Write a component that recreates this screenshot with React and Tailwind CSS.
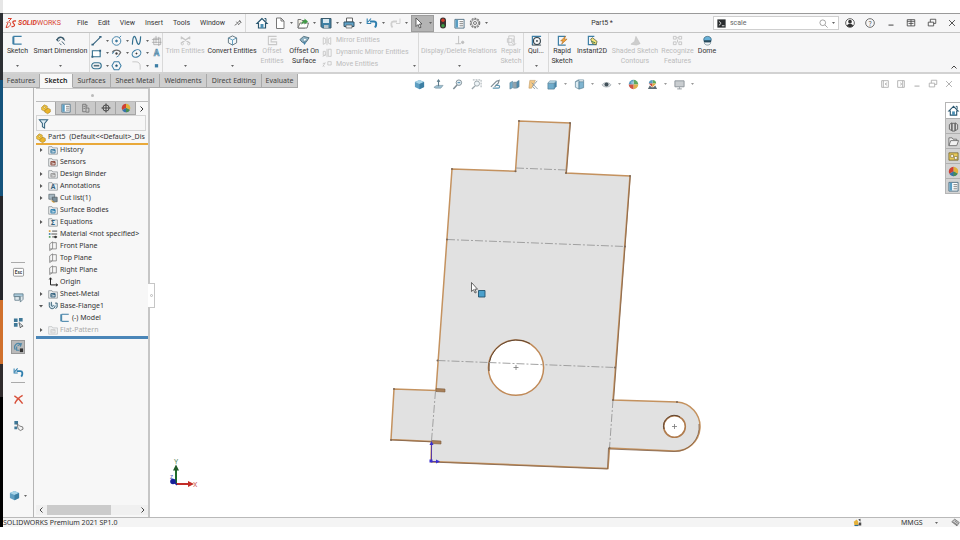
import React from 'react';
import clsx from 'clsx';

// All small glyphs share a 12x12 grid
const GLYPHS = {
  ds: (
    <g fill="none" stroke="#d9402c" strokeWidth="1">
      <path d="M3 1.500h3.500L4 4M1.500 5.500C5 4 6.500 6 5 8.500 4 10 2.500 10.500 1 10.500L2.800 6" />
      <path d="M11 4C8 3.500 7 5 8.500 6.500 10.500 8 9.500 10 6.500 9.500" strokeWidth="1.300" />
    </g>
  ),
  pin: (
    <g stroke="#666" fill="none" strokeWidth="1.300">
      <path d="M1 9.500l3.500-2.500" />
      <path d="M3.500 4l4 5M5 5.500L9 3M7.500 8L10 5M8 1.500l3 4" />
    </g>
  ),
  home: (
    <g>
      <path d="M6 1.500L1 6.500h1.500V11h7V6.500H11z" fill="#fff" stroke="#29566f" strokeWidth="1.200" />
      <path d="M4.500 11V7h3v4z" fill="#4b8fb3" />
      <path d="M8.500 1.500h1.500v3" fill="none" stroke="#29566f" />
    </g>
  ),
  page: <path d="M2.500 1h4.500l3 3v7.500h-7.500zM7 1v3h3" fill="#fff" stroke="#777" />,
  open: (
    <g>
      <path d="M1 2.500h3l1 1h3V11H1z" fill="#f2f0e4" stroke="#777" />
      <path d="M1 11l2-5h8.500L10 11z" fill="#fff" stroke="#777" />
      <path d="M4.500 8c0-3 1-4.500 3-4.500V1.500l3.500 3-3.500 3V5.500C6 5.500 5.500 6.500 4.500 8z" fill="#3f9b45" />
    </g>
  ),
  save: (
    <g>
      <path d="M1 1.500h10v9.500H2.500L1 9.500z" fill="#3f80a4" stroke="#3b5b6c" />
      <path d="M3 2h6v4H3z" fill="#d8e8f0" />
      <path d="M4 8h4.500v3H4z" fill="#b9c6cd" />
    </g>
  ),
  print: (
    <g>
      <path d="M3.500 1h6v4h-6z" fill="#fff" stroke="#666" />
      <path d="M1 5h10v4.500H1z" fill="#5fa2c8" stroke="#34566a" />
      <path d="M3 8h6v3H3z" fill="#e9eef1" stroke="#555" strokeWidth=".7" />
    </g>
  ),
  undo: (
    <g fill="none" stroke="#2f7fae">
      <path d="M4 4.500H8c2.500 0 3 3 1 6" strokeWidth="2" />
      <path d="M1.200 1.500v5h4M5 1.500L2 5" strokeWidth="1.100" />
    </g>
  ),
  redo: (
    <g fill="none" stroke="#cfcfcf">
      <path d="M8 4.500H4.500c-2.500 0-3 3-1 6" strokeWidth="1.800" />
      <path d="M11 1.500v5H7" strokeWidth="1" />
    </g>
  ),
  arrow: <path d="M3 1v8.500l2-2 1.500 3.500 1.500-.7L6.500 7H9z" fill="#fff" stroke="#444" strokeWidth=".8" />,
  traffic: (
    <g>
      <rect x="3" y=".5" width="6" height="11" rx="3" fill="#3c3330" />
      <circle cx="6" cy="3.300" r="1.700" fill="#d23b2b" />
      <circle cx="6" cy="8.700" r="1.700" fill="#3f9b45" />
    </g>
  ),
  list: (
    <g>
      <path d="M1 1.500h10v9.500H1z" fill="#fff" stroke="#4f6f82" />
      <path d="M1.500 2h3v8.500h-3z" fill="#5a9dc2" />
      <path d="M6 4h4M6 6.200h4M6 8.500h4" stroke="#555" strokeWidth=".8" />
    </g>
  ),
  gear: (
    <g fill="none" stroke="#777">
      <circle cx="6" cy="6" r="4.700" strokeDasharray="2 1" strokeWidth="1.200" />
      <circle cx="6" cy="6" r="3.600" strokeWidth=".8" />
      <circle cx="6" cy="6" r="1.500" />
    </g>
  ),
  prompt: (
    <g>
      <path d="M.5.500h11v11H.5z" fill="#2a2d2f" />
      <path d="M2.500 3l3 2.800-3 2.700M6.500 9h3.500" stroke="#fff" fill="none" strokeWidth="1.100" />
    </g>
  ),
  search: (
    <g fill="none" stroke="#888">
      <circle cx="5" cy="5" r="3.800" />
      <path d="M8 8l3.500 3.500" />
    </g>
  ),
  user: (
    <g>
      <circle cx="6" cy="6" r="5.200" fill="#fff" stroke="#444" />
      <circle cx="6" cy="4.400" r="2.200" fill="#333" />
      <path d="M2.300 9.500C3 6 9 6 9.700 9.500 8 11.300 4 11.300 2.300 9.500z" fill="#333" />
    </g>
  ),
  help: (
    <g>
      <circle cx="6" cy="6" r="5.200" fill="none" stroke="#555" />
      <text x="6" y="9" textAnchor="middle" fontSize="8" fill="#555">?</text>
    </g>
  ),
  minimize: <path d="M3 8.500h6" stroke="currentColor" strokeWidth="1.200" />,
  tile: <path d="M1.500 2h9v7.500h-9zM6 2v7.500M1.500 4h9M3 6.500h6" fill="none" stroke="currentColor" />,
  restore: <path d="M1.500 5h6.500v4.500H1.500zM4 5V1.500h6.500v5H8" fill="none" stroke="currentColor" />,
  close: <path d="M2.500 2.500l7 7M9.500 2.500l-7 7" stroke="currentColor" strokeWidth="1.100" />,
  dockLeft: <path d="M2 2h8v8H2zM4 2v8M8.500 4.500L6 6l2.500 1.500" fill="none" stroke="currentColor" />,
  dockRight: <path d="M2 2h8v8H2zM8 2v8M5 4.500L7 6 5 7.500" fill="none" stroke="currentColor" />,
  sketch: <path d="M10.500 1.500H2v8.500h8.500M1 10V1.500" fill="none" stroke="#3c7ea5" strokeWidth="1.200" />,
  smartDim: (
    <g fill="none" stroke="#3a5a6c">
      <path d="M2 6C3.500 1.500 8.500 1.500 10 5" strokeWidth="1.500" />
      <path d="M1.500 4.500l2 2.500 2-2M8 4l3 2M7.500 7l3 3.500M5 9l2 2" />
    </g>
  ),
  line: (
    <g>
      <path d="M2 10.500L10 2.500" stroke="#33627e" strokeWidth="1.200" />
      <path d="M.5 9.500h2.500v2H.5zM9 1h2.500v2H9z" fill="#33627e" />
    </g>
  ),
  circle: (
    <g fill="none" stroke="#3c7ea5">
      <circle cx="6" cy="6.500" r="4.700" />
      <circle cx="6" cy="6.500" r="1" fill="#33627e" />
      <path d="M9 3l2-2" />
    </g>
  ),
  spline: <path d="M1.500 10.500C2-1 4.500 0 6 6s4 6.500 4.500-4.500" fill="none" stroke="#33708f" strokeWidth="1.300" />,
  plane: <path d="M3 3.500h7.500v7H3zM1 5h8M5.500 1v8M8.500 2v10M1 8h10.500" fill="none" stroke="#999" strokeWidth=".7" />,
  rect: (
    <g>
      <path d="M1.500 3h8.500v6.500H1.500z" fill="#fff" stroke="#33708f" strokeWidth="1.200" />
      <path d="M.5 8.500h2v2h-2zM9 2h2v2H9z" fill="#33627e" />
    </g>
  ),
  arc: (
    <g fill="none" stroke="#6b6b6b">
      <path d="M1.500 5C3 1.500 9 1.500 10.500 5l-2 2.500" strokeWidth="1.300" />
      <path d="M3.500 3.500l-2 3M6 10L9 8" stroke="#3c7ea5" />
      <circle cx="6" cy="6" r="1" fill="#333" />
    </g>
  ),
  ellipse: (
    <g fill="none" stroke="#3c7ea5">
      <ellipse cx="6" cy="6" rx="5" ry="3.800" transform="rotate(-30 6 6)" strokeWidth="1.200" />
      <path d="M5 6h2M6 5v2" stroke="#333" />
    </g>
  ),
  textA: (
    <text x="6" y="9" textAnchor="middle" fontSize="9" fontWeight="bold" fill="#e3edf3" stroke="#5b8fae" strokeWidth=".8">A</text>
  ),
  slot: (
    <g fill="none" stroke="#33708f">
      <rect x=".8" y="3" width="10.400" height="6.500" rx="3.200" strokeWidth="1.200" />
      <path d="M3 6.200h6" strokeWidth="1.800" stroke="#55707f" />
    </g>
  ),
  polygon: (
    <g fill="none" stroke="#3c7ea5">
      <path d="M3.500 1.800h5L11 6.200l-2.500 4.500h-5L1 6.200z" strokeWidth="1.100" />
      <circle cx="6" cy="6.200" r="1" fill="#333" />
    </g>
  ),
  fillet: <path d="M1.500 2h4c3 0 4.500 2 4.500 4.500v4" fill="none" stroke="#c4c4c4" />,
  point: <path d="M4.200 4.500h3.600v3.600H4.200z" fill="#3c7ea5" />,
  trim: (
    <g fill="none" stroke="#c8c8c8" strokeWidth="1.500">
      <path d="M1 2l10 7M11 2L1 9M1.500 1.500v3M10.500 1.500v3" />
      <circle cx="2.500" cy="9.500" r="1.300" strokeWidth="1" />
      <circle cx="9.500" cy="9.500" r="1.300" strokeWidth="1" />
    </g>
  ),
  cubeLine: (
    <g fill="#f4f8fa" stroke="#4a5f6b" strokeWidth=".9">
      <path d="M6 1l4.500 2.200v5.300L6 11 1.500 8.500V3.200z" />
      <path d="M1.500 3.200L6 5.500l4.500-2.300M6 5.500V11" fill="none" stroke="#4a8fb5" />
    </g>
  ),
  offset: <path d="M10.500 1.500H1.500v9h9v-3h-6v-3h6" fill="none" stroke="#c8c8c8" strokeWidth="1.200" />,
  offsetSurf: (
    <g>
      <path d="M1 5l4-3.500L11 3 8 7.500 3.500 8z" fill="#8fb2c4" stroke="#4d6c7c" />
      <path d="M5 4l3 .5-2 2z" fill="#fff" />
      <path d="M4 8l2 3 2-3" fill="#3c7ea5" />
    </g>
  ),
  mirror: <path d="M1.500 2v8l3-1.500v-5zM10.500 2v8l-3-1.500v-5zM6 1v10" fill="none" stroke="#c4c4c4" />,
  mirrorDyn: <path d="M1.500 4v5h2.500V4zM7.500 1.500h3.500V10H7.500zM6 1v10M1 10.500l3-3" fill="none" stroke="#c4c4c4" />,
  move: <path d="M1 8l3-5M1 4h2.500M7 2h4v4H7zM1 6l2 2" fill="none" stroke="#c4c4c4" />,
  relations: (
    <g fill="none" stroke="#bdbdbd">
      <path d="M5 1v8.500M1.500 9.500h6" />
      <circle cx="9.500" cy="8" r="1.300" fill="#bdbdbd" />
    </g>
  ),
  repair: <path d="M3 1h6v10H3zM1.500 4h5v4h-5zM6 8l3 3 2-2M8 4v4" fill="none" stroke="#c8c8c8" />,
  quick: (
    <g fill="none" stroke="#35444d">
      <path d="M1.500 11V1.500H11" stroke="#3c7ea5" strokeWidth="1.300" />
      <circle cx="6.500" cy="6.500" r="3.800" strokeWidth="1.200" />
      <path d="M5.500 6.500h2M6.500 5.500v2M1 11h10" />
    </g>
  ),
  rapid: (
    <g>
      <path d="M9 1.500H1.500v9.500h8" fill="none" stroke="#3c7ea5" strokeWidth="1.300" />
      <path d="M9.500 1L4 6.500h2.500L5 10l6-5.500H8z" fill="#f2a33a" stroke="#a8641a" strokeWidth=".6" />
    </g>
  ),
  instant: (
    <g>
      <path d="M8 1.500H1.500v9h9" fill="none" stroke="#3c7ea5" strokeWidth="1.300" />
      <path d="M4 4.500l2-1.500 5 4-1 3.500-4-1z" fill="#f3e27a" stroke="#4e5b3c" strokeWidth=".8" />
      <path d="M5 7l4 1.500" stroke="#317a56" />
    </g>
  ),
  shaded: <path d="M1 10l4-3 1.500-5.500L11 9.500 7 11z" fill="#cdcdcd" stroke="#bcbcbc" strokeWidth=".6" />,
  recognize: <path d="M1.500 1.500h3v3h-3zM7.500 1.500h3v3h-3zM1.500 7.500h3v3h-3zM7.500 7.500h3v3h-3zM4.500 3h3M6 5v3" fill="none" stroke="#c4c4c4" />,
  dome: (
    <g>
      <path d="M2 6V4.500C2 .5 10 .5 10 4.500V6z" fill="#68b1d8" stroke="#2c5d78" strokeWidth=".8" />
      <path d="M2 6h8v1.800H2z" fill="#1f4457" />
      <path d="M2.500 8h7c0 4-7 4-7 0z" fill="#eef2f4" stroke="#69818e" strokeWidth=".8" />
    </g>
  ),
  cube: (
    <g>
      <path d="M6 1l5 2.200v5.600L6 11.200 1 8.800V3.200z" fill="#5f9fc2" />
      <path d="M1 3.200L6 1l5 2.200-5 2.300z" fill="#a9d5e8" />
      <path d="M6 5.500l5-2.300v5.600l-5 2.400z" fill="#3d7fa3" />
    </g>
  ),
  normalTo: (
    <g>
      <path d="M1 9l3-2h7l-2.500 3H3z" fill="#9cc0d2" stroke="#6c8896" strokeWidth=".6" />
      <path d="M6 1v7M4.500 3L6 1l1.500 2" fill="none" stroke="#5f7d8c" strokeWidth="1.200" />
    </g>
  ),
  zoomFit: (
    <g fill="none" stroke="#7d8c95">
      <circle cx="7.500" cy="4" r="3" fill="#e6eff4" />
      <path d="M5.500 6.500L1.500 11" strokeWidth="1.600" />
      <path d="M6 4h3" stroke="#3c7ea5" />
    </g>
  ),
  zoomArea: (
    <g fill="none" stroke="#9aa5ab">
      <path d="M2 1h9v8" strokeDasharray="2 1" />
      <circle cx="6.500" cy="5" r="2.800" fill="#eef4f7" />
      <path d="M4.500 7.500L1 11" strokeWidth="1.500" />
    </g>
  ),
  prevView: (
    <g fill="none" stroke="#7d8c95">
      <path d="M1 8.500l6-6 3-1-1 3-4 4" strokeWidth="1.200" />
      <path d="M3 10h6c2 0 2-3 0-3H6" stroke="#5f96b2" strokeWidth="1.200" />
    </g>
  ),
  section: (
    <g stroke="#4f788e" strokeWidth=".6">
      <path d="M1 4l3-1.500V9.500L1 11z" fill="#6faccc" />
      <path d="M5 3.500h3V10H5z" fill="#9aa6ad" />
      <path d="M8.500 3L11 1.500v7L8.500 10z" fill="#4f8db1" />
    </g>
  ),
  dynAnno: (
    <g>
      <path d="M2 1.500h6L4 10H1z" fill="#f4c885" stroke="#b9925c" strokeWidth=".6" />
      <path d="M4 4l6.500 7M10 2L5 8l2.500 3" fill="none" stroke="#8b9aa3" />
    </g>
  ),
  viewOrient: (
    <g>
      <path d="M1 4.500h7V11H1z" fill="#6faccc" stroke="#4f788e" strokeWidth=".7" />
      <path d="M1 4.500l2-2.500h7L8 4.500z" fill="#bcdcea" stroke="#4f788e" strokeWidth=".5" />
      <path d="M8 4.500L10.500 2v6L8 11z" fill="#4583a6" />
    </g>
  ),
  displayStyle: (
    <g stroke="#4f788e" strokeWidth=".7">
      <path d="M1.500 3l4-1.500V11l-4-2z" fill="#dcebf2" />
      <path d="M5.500 3h5v6.500l-5 1.500z" fill="#7fb4d0" />
      <path d="M1.500 3l3-2h6v2" fill="none" />
    </g>
  ),
  eye: (
    <g>
      <path d="M1 6.500C3.500 3 8.500 3 11 6.500 8.500 9.500 3.500 9.500 1 6.500z" fill="#d9dee1" stroke="#99a3a8" strokeWidth=".7" />
      <circle cx="6" cy="6" r="2.200" fill="#42515a" />
    </g>
  ),
  ball: (
    <g>
      <path d="M6 6V.8A5.200 5.200 0 0 1 11.200 6z" fill="#5fa860" />
      <path d="M6 6V.8A5.200 5.200 0 0 0 .8 6z" fill="#5a9dc2" />
      <path d="M6 6h5.200A5.200 5.200 0 0 1 6 11.200z" fill="#e0b04c" />
      <path d="M6 6H.8A5.200 5.200 0 0 0 6 11.200z" fill="#cf5347" />
      <circle cx="5" cy="4" r="1.600" fill="#fff" opacity=".35" />
    </g>
  ),
  ballDark: (
    <g>
      <path d="M6 6V.8A5.200 5.200 0 0 1 10.500 8.500z" fill="#e0b13a" />
      <path d="M6 6V.8A5.200 5.200 0 0 0 1.500 8.500z" fill="#cf4033" />
      <path d="M6 6l4.500 2.500a5.200 5.200 0 0 1-9 0z" fill="#3572a8" />
      <path d="M6 6l4.500 2.500a5.200 5.200 0 0 1-4.500 2.700z" fill="#4a8f50" />
    </g>
  ),
  scene: (
    <g>
      <path d="M6 5V1a4 4 0 0 1 4 4z" fill="#5fa860" />
      <path d="M6 5V1a4 4 0 0 0-4 4z" fill="#5a9dc2" />
      <path d="M2 5h4v4z" fill="#c8463b" />
      <path d="M6 5h4l-4 4z" fill="#e0a93a" />
      <path d="M1 11l2-4 2 2h2l2-2 2 4z" fill="#5c6b73" />
    </g>
  ),
  monitor: (
    <g>
      <path d="M1 2h10v6.500H1z" fill="#c9cdd0" stroke="#8a9298" />
      <path d="M6 9v1.500M3.500 10.800h5" stroke="#8a9298" />
    </g>
  ),
  part: (
    <g stroke="#9a7418" strokeWidth=".6">
      <path d="M.8 4l3-3L7.500 2.500v3.500L4 8.500.8 7z" fill="#f5c83f" />
      <path d="M4.500 7.500l4-2.500 2.700 1.500v3L8 11.700l-3.500-2z" fill="#eab42c" />
      <circle cx="4" cy="4" r="1.200" fill="#fff3c4" />
    </g>
  ),
  config: <path d="M2 1.500h4v9H2zM6 3.500h2M6 6h3.500v5H6M3 4h2M3 6.500h2" fill="none" stroke="#666" strokeWidth=".9" />,
  target: (
    <g fill="none" stroke="#333">
      <circle cx="6" cy="6" r="3.700" />
      <path d="M6 .5v11M.5 6h11" />
    </g>
  ),
  filter: <path d="M1.500 2h9L7.200 6v5L4.800 9.500V6z" fill="#dcebf3" stroke="#33637d" strokeWidth="1.100" />,
  folder: <path d="M.8 2h4l1 1.500h5.500v7.500H.8z" fill="#eceeef" stroke="#8a9094" strokeWidth=".9" />,
  planeItem: <path d="M2 3.500l3.500-2.500v8L2 11.500zM5.500 2h4.500v7.500H2.500" fill="none" stroke="#777" strokeWidth=".9" />,
  origin: <path d="M3 1v8.500h8.500M1.500 3L3 1l1.500 2M9.500 8l2 1.500-2 1.500" fill="none" stroke="#222" strokeWidth="1.200" />,
  material: (
    <g>
      <path d="M5 2.500h6M4 6h7M5 9.500h6" stroke="#444" strokeWidth="1.100" />
      <path d="M1 1.500h2v2H1z" fill="#d99a2b" />
      <path d="M1 5h2v2H1z" fill="#3c7ea5" />
      <path d="M1 8.500h2v2H1z" fill="#4a9e58" />
      <circle cx="9" cy="9.500" r="1.500" fill="#333" />
    </g>
  ),
  cutlist: (
    <g>
      <path d="M1 1.500h7v6H1z" fill="#a7b9c3" stroke="#56636a" strokeWidth=".8" />
      <path d="M5 5h6v5.500H6z" fill="#7a8f9b" stroke="#4c565c" strokeWidth=".8" />
      <path d="M2.500 8l3.500 3.500h3z" fill="#d79c2c" />
    </g>
  ),
  flange: <path d="M1.500 1.500v4c0 5 7 5 7 0M4 1v4c0 2 2 2 2.500 0M8.500 2.500h2.500v5L9 9" fill="#d5e5ed" stroke="#315a70" strokeWidth="1.100" />,
  esc: (
    <g>
      <rect x=".5" y="1.500" width="11" height="8.500" rx="1" fill="#fff" stroke="#777" strokeWidth=".8" />
      <text x="6" y="7.800" textAnchor="middle" fontSize="5" fontWeight="bold" fill="#444">Esc</text>
    </g>
  ),
  toolFilter: (
    <g>
      <path d="M1 2h10v3H1z" fill="#a8c8d9" stroke="#53707f" strokeWidth=".8" />
      <path d="M2 5h5v4H2zM8 5v6l3-3V5" fill="#dfe8ec" stroke="#53707f" strokeWidth=".8" />
    </g>
  ),
  grid: (
    <g fill="#3f7897">
      <path d="M1 1.500h4v4H1zM6.500 1h4v4h-4zM1 6.500h4v4H1z" />
      <path d="M6.500 6l4.500 4-2 .5-1 1.500z" fill="#dfe8ec" stroke="#444" strokeWidth=".8" />
    </g>
  ),
  rotateLock: (
    <g fill="none" stroke="#4d88a8" strokeWidth="1.300">
      <path d="M8.500 2C4 0 0 4 2.500 8.500M5 4l4-2-1 3M4 5v4h3" />
      <path d="M7.500 7h3.500v4H7.500z" fill="#333" stroke="none" />
    </g>
  ),
  redX: <path d="M1.500 2C5 4 8 7 10.500 10.500M10.500 1.500C6 4 3.500 7 2 10.500" fill="none" stroke="#d8503a" strokeWidth="1.600" />,
  pick: (
    <g>
      <path d="M1.500 1h4v4h-4zM1.500 7h3v3h-3z" fill="#3f7897" />
      <path d="M4.500 4l1 5.500L8 11.500 11 10 10.500 7.500 7 6.500z" fill="#f3f3f3" stroke="#555" strokeWidth=".8" />
    </g>
  ),
  library: <path d="M1.500 4l2.500-2v8.500L1.500 9zM4.500 2.500h3V11h-3zM8 2l2.500 2v5L8 10.500z" fill="#dadada" stroke="#555" strokeWidth=".9" />,
  folderOpen: <path d="M1 10.500V2h3.500l1 1.500h4V5M1 10.500l2-5.500h8.500l-2 5.500z" fill="#f1f1f1" stroke="#666" strokeWidth=".9" />,
  palette: (
    <g>
      <path d="M1 2h10v8H1z" fill="#e6c85a" stroke="#6a5a25" strokeWidth=".8" />
      <path d="M3 4h3v3H3zM7 6h3v3H7z" fill="#fff" stroke="#6a5a25" strokeWidth=".6" />
    </g>
  ),
  rebuild: (
    <g>
      <path d="M1 5l4-3 2 3v5H2z" fill="#e4b13a" />
      <path d="M7 2l3-1v4M8 6h3v4H7z" fill="#4b4b4b" />
      <path d="M2 10h5" stroke="#2d6f93" strokeWidth="1.500" />
    </g>
  ),
  tag: <path d="M1 5l4-3.500L11 6l-3 4.500zM3 5.500l5 3.500M5 3.500l4 3.500" fill="#cfcfcf" stroke="#555" strokeWidth=".9" />,
};

const Glyph = ({ name, size = 'size-[12px]' }) => (
  <svg viewBox="0 0 12 12" className={clsx('shrink-0 overflow-visible', size)} aria-hidden="true">
    {GLYPHS[name]}
  </svg>
);

const Caret = ({ className = 'text-[#666]' }) => (
  <svg viewBox="0 0 3 2" className={clsx('w-[3px] h-[2px] shrink-0', className)} aria-hidden="true">
    <path d="M0 0h3L1.500 2z" fill="currentColor" />
  </svg>
);

// icon with its drop-down arrow on the right
const SplitButton = ({ name, label, size }) => (
  <button aria-label={label} className="flex items-center w-[23px] h-full gap-[4px] pl-px">
    <Glyph name={name} size={size} />
    <Caret />
  </button>
);

const Command = ({ name, lines, width, caret, disabled }) => (
  <button
    disabled={disabled}
    className={clsx(
      'flex flex-col items-center shrink-0 h-full pt-[2px] pb-[5px] whitespace-nowrap',
      disabled ? 'text-[#bcbcbc]' : 'text-[#333]',
      width
    )}
  >
    <Glyph name={name} size="size-[11px]" />
    {lines.map((line) => (
      <span key={line} className="leading-[10px]">{line}</span>
    ))}
    {caret && (
      <span className="flex mt-auto">
        <Caret />
      </span>
    )}
  </button>
);

const Divider = () => <div className="w-px h-full bg-[#d9d9d9] shrink-0" />;

const TitleBar = () => (
  <header className="flex items-center h-[20px] shrink-0 border-t border-[#9a9a9a] border-b border-b-[#c4c4c4] bg-[#f6f6f7]">
    <div className="flex items-center gap-px pl-[2px] w-[68px] shrink-0 text-[#d9402c] text-[7px]">
      <Glyph name="ds" />
      <span><b className="italic">SOLID</b>WORKS</span>
    </div>
    <nav className="flex items-center gap-[10px] pl-[6px] text-[7px] text-[#333]">
      {['File', 'Edit', 'View', 'Insert', 'Tools', 'Window'].map((m) => (
        <button key={m}>{m}</button>
      ))}
    </nav>
    <button aria-label="Pin menu" className="ml-[9px] mr-[3px]">
      <Glyph name="pin" size="size-[8px]" />
    </button>
    <Divider />
    <div className="flex items-center h-full pl-[10px]">
      <button aria-label="Home" className="w-[17px]"><Glyph name="home" /></button>
      <SplitButton name="page" label="New" />
      <SplitButton name="open" label="Open" />
      <SplitButton name="save" label="Save" />
      <SplitButton name="print" label="Print" />
      <SplitButton name="undo" label="Undo" />
      <SplitButton name="redo" label="Redo" />
      <button aria-label="Select" className="flex items-center justify-center gap-[4px] w-[23px] h-[17px] bg-[#b4b4b4] border border-[#9c9c9c]">
        <Glyph name="arrow" />
        <Caret />
      </button>
      <button aria-label="Rebuild" className="flex justify-center w-[17px]"><Glyph name="traffic" /></button>
      <button aria-label="File properties" className="flex justify-center w-[17px]"><Glyph name="list" size="size-[11px]" /></button>
      <SplitButton name="gear" label="Options" />
    </div>
    <h1 className="flex-1 text-center text-[7px] text-[#333]">Part5 *</h1>
    <label className="flex items-center gap-[4px] w-[126px] h-[14px] pl-[3px] pr-[3px] bg-white border border-[#cfcfcf]">
      <Glyph name="prompt" size="size-[9px]" />
      <input aria-label="Search commands" defaultValue="scale" className="flex-1 min-w-0 text-[7px] text-[#666] outline-none" />
      <Glyph name="search" size="size-[9px]" />
      <Caret />
    </label>
    <div className="flex items-center justify-between w-[121px] pl-[6px] pr-[3px] text-[#444]">
      <button aria-label="Account"><Glyph name="user" size="size-[10px]" /></button>
      <button aria-label="Help"><Glyph name="help" size="size-[10px]" /></button>
      <button aria-label="Minimize"><Glyph name="minimize" size="size-[10px]" /></button>
      <button aria-label="Tile windows"><Glyph name="tile" size="size-[10px]" /></button>
      <button aria-label="Restore"><Glyph name="restore" size="size-[10px]" /></button>
      <button aria-label="Close"><Glyph name="close" size="size-[10px]" /></button>
    </div>
  </header>
);

const SKETCH_TOOLS = [
  ['line', 'circle', 'spline', 'plane'],
  ['rect', 'arc', 'ellipse', 'textA'],
  ['slot', 'polygon', 'fillet', 'point'],
];

const Ribbon = () => (
  <section className="flex h-[41px] shrink-0 bg-[#f6f6f7] border-b-2 border-[#d2d2d2] text-[7px]">
    <Command name="sketch" lines={['Sketch']} width="w-[29px]" caret />
    <Command name="smartDim" lines={['Smart Dimension']} width="w-[57px]" caret />
    <Divider />
    <div className="flex flex-col justify-between w-[72px] pt-[2px] pb-px pl-px">
      {SKETCH_TOOLS.map((row) => (
        <div key={row[0]} className="flex">
          {row.map((name, i) => (
            <button
              key={name}
              aria-label={name}
              className={clsx('flex items-center gap-[4px] shrink-0', i < 3 ? 'w-[20px]' : 'w-[11px]')}
            >
              <Glyph name={name} size="size-[11px]" />
              {i < 3 && name !== 'polygon' && <Caret />}
            </button>
          ))}
        </div>
      ))}
    </div>
    <Divider />
    <Command name="trim" lines={['Trim Entities']} width="w-[44px]" caret disabled />
    <Command name="cubeLine" lines={['Convert Entities']} width="w-[50px]" caret />
    <Command name="offset" lines={['Offset', 'Entities']} width="w-[30px]" disabled />
    <Command name="offsetSurf" lines={['Offset On', 'Surface']} width="w-[34px]" />
    <div className="flex flex-col justify-between w-[88px] py-[2px] pl-px text-[#bcbcbc]">
      {[['mirror', 'Mirror Entities'], ['mirrorDyn', 'Dynamic Mirror Entities'], ['move', 'Move Entities']].map(([name, label]) => (
        <button key={name} disabled className="flex items-center gap-[4px] leading-[11px] whitespace-nowrap">
          <Glyph name={name} size="size-[10px]" />
          {label}
        </button>
      ))}
    </div>
    <div className="flex items-end w-[9px] pb-[5px] pl-[4px]"><Caret /></div>
    <Divider />
    <Command name="relations" lines={['Display/Delete Relations']} width="w-[80px]" caret disabled />
    <Command name="repair" lines={['Repair', 'Sketch']} width="w-[24px]" disabled />
    <Divider />
    <Command name="quick" lines={['Qui...']} width="w-[24px]" caret />
    <Divider />
    <Command name="rapid" lines={['Rapid', 'Sketch']} width="w-[26px]" />
    <Command name="instant" lines={['Instant2D']} width="w-[34px]" />
    <Command name="shaded" lines={['Shaded Sketch', 'Contours']} width="w-[52px]" disabled />
    <Command name="recognize" lines={['Recognize', 'Features']} width="w-[33px]" disabled />
    <Command name="dome" lines={['Dome']} width="w-[26px]" />
    <button aria-label="Collapse ribbon" className="self-end ml-auto mr-[3px] mb-[3px]">
      <svg viewBox="0 0 6 4" className="w-[6px] h-[4px]">
        <path d="M.5 3.500L3 1l2.500 2.500" fill="none" stroke="#444" />
      </svg>
    </button>
  </section>
);

const RIBBON_TABS = [
  ['Features', 'w-[37px]'],
  ['Sketch', 'w-[33px]'],
  ['Surfaces', 'w-[38px]'],
  ['Sheet Metal', 'w-[49px]'],
  ['Weldments', 'w-[47px]'],
  ['Direct Editing', 'w-[55px]'],
  ['Evaluate', 'w-[36px]'],
];

const VIEW_TOOLS = [
  ['cube'], ['normalTo'], ['zoomFit'], ['zoomArea'], ['prevView'], ['section'], ['dynAnno'],
  ['viewOrient', true], ['displayStyle', true], ['eye', true], ['ball'], ['scene', true], ['monitor', true],
];

const TabRow = () => (
  <div className="flex items-start h-[14px] shrink-0 bg-white">
    <div role="tablist" className="flex h-full font-['Noto_Sans','Open_Sans',sans-serif] text-[7px]">
      {RIBBON_TABS.map(([label, width]) => (
        <button
          key={label}
          role="tab"
          aria-selected={label === 'Sketch'}
          className={clsx(
            'h-full border-r border-b border-[#a9a9a9] leading-[13px] whitespace-nowrap',
            width,
            label === 'Sketch' ? 'bg-[#f8f8f8] font-semibold text-[#222] border-b-[#f8f8f8]' : 'bg-[#cfcfcf] text-[#444]'
          )}
        >
          {label}
        </button>
      ))}
    </div>
    <div className="flex flex-1 items-center h-[20px] pl-[116px] pr-[6px]">
      {VIEW_TOOLS.map(([name, menu]) => (
        <button key={name} aria-label={name} className={clsx('flex items-center shrink-0 gap-[6px]', menu ? 'w-[27px]' : 'w-[19px]')}>
          <Glyph name={name} size="size-[11px]" />
          {menu && <Caret className="text-[#999]" />}
        </button>
      ))}
      <div className="flex gap-[6px] ml-auto text-[#aaa]">
        {['dockLeft', 'dockRight', 'minimize', 'restore', 'close'].map((name) => (
          <button key={name} aria-label={name}><Glyph name={name} size="size-[10px]" /></button>
        ))}
      </div>
    </div>
  </div>
);

const SideButton = ({ name, active }) => (
  <button
    aria-label={name}
    className={clsx('flex items-center justify-center size-[14px]', active && 'bg-[#b9b9b9] border border-[#999]')}
  >
    <Glyph name={name} size="size-[11px]" />
  </button>
);

const SideBar = () => (
  <aside className="flex flex-col items-center w-[31px] shrink-0 pb-[16px] bg-[#f7f7f7] border-r border-[#b5b5b5]">
    <div className="flex flex-col items-center gap-[11px] mt-[174px] pt-[2px] border-t border-[#aaa]">
      <SideButton name="esc" />
      <SideButton name="toolFilter" />
      <SideButton name="grid" />
      <SideButton name="rotateLock" active />
      <SideButton name="undo" />
    </div>
    <div className="flex flex-col items-center gap-[12px] mt-[3px] pt-[9px] border-t border-[#aaa]">
      <SideButton name="redX" />
      <SideButton name="pick" />
    </div>
    <button aria-label="Appearance" className="flex items-center gap-[4px] mt-auto">
      <Glyph name="cube" size="size-[11px]" />
      <Caret />
    </button>
  </aside>
);

// badge: small mark drawn inside the folder icon
const TREE = [
  { label: 'History', icon: 'folder', badge: '#3c7ea5', open: false },
  { label: 'Sensors', icon: 'folder', badge: '#8c4a3c' },
  { label: 'Design Binder', icon: 'folder', badge: '#999999', open: false },
  { label: 'Annotations', icon: 'folder', letter: 'A', open: false },
  { label: 'Cut list(1)', icon: 'cutlist', open: false },
  { label: 'Surface Bodies', icon: 'folder', badge: '#2a7fb0' },
  { label: 'Equations', icon: 'folder', letter: 'Σ', open: false },
  { label: 'Material <not specified>', icon: 'material' },
  { label: 'Front Plane', icon: 'planeItem' },
  { label: 'Top Plane', icon: 'planeItem' },
  { label: 'Right Plane', icon: 'planeItem' },
  { label: 'Origin', icon: 'origin' },
  { label: 'Sheet-Metal', icon: 'folder', badge: '#33627e', open: false },
  { label: 'Base-Flange1', icon: 'flange', open: true },
  { label: '(-) Model', icon: 'sketch', child: true },
  { label: 'Flat-Pattern', icon: 'folder', badge: '#aaaaaa', open: false, muted: true },
];

const TreeIcon = ({ item }) => (
  <svg viewBox="0 0 12 12" className={clsx('size-[10px] shrink-0 overflow-visible', item.muted && 'opacity-50')} aria-hidden="true">
    {GLYPHS[item.icon]}
    {item.badge && <path d="M3.500 9.500V5.500h5v4zM3.500 7.500l5-1" fill="none" stroke={item.badge} strokeWidth="1.200" />}
    {item.letter && (
      <text x="6" y="10" textAnchor="middle" fontSize="8" fontWeight="bold" fill="#33627e">{item.letter}</text>
    )}
  </svg>
);

const TreeRow = ({ item }) => (
  <li className={clsx('flex items-center h-[12px] whitespace-nowrap', item.child ? 'pl-[12px]' : 'pl-0', item.muted ? 'text-[#aaa]' : 'text-[#333]')}>
    <span className="flex w-[12px] shrink-0 pl-[3px]">
      {item.open !== undefined && (
        <svg viewBox="0 0 4 4" className={clsx('size-[4px]', item.open && 'rotate-90')}>
          <path d="M1 0l2.500 2L1 4z" fill="#555" />
        </svg>
      )}
    </span>
    <TreeIcon item={item} />
    <span className="pl-[2px]">{item.label}</span>
  </li>
);

const FeatureManager = () => (
  <section className="relative flex flex-col w-[116px] shrink-0 bg-[#f7f7f7] border-r-2 border-[#c6c6c6] pl-[2px] font-['Noto_Sans','Open_Sans',sans-serif] text-[7px]">
    <div className="flex items-center justify-center h-[13px] shrink-0 border-t border-[#c9c9c9]">
      <span className="size-[3px] rounded-full bg-[#bbb]" />
    </div>
    <div className="flex h-[14px] shrink-0 border-t border-[#bbb]">
      {['part', 'list', 'config', 'target', 'ballDark'].map((name, i) => (
        <button
          key={name}
          aria-label={name}
          className={clsx('flex items-center justify-center w-[20px] border-r border-[#a5a5a5]', i === 0 ? 'bg-[#f7f7f7]' : 'bg-[#c9c9c9] border-b')}
        >
          <Glyph name={name} size="size-[10px]" />
        </button>
      ))}
      <button aria-label="More tabs" className="flex flex-1 items-center justify-center">
        <svg viewBox="0 0 4 6" className="w-[4px] h-[6px]"><path d="M.5.500L3 3 .5 5.500" fill="none" stroke="#333" /></svg>
      </button>
    </div>
    <button aria-label="Filter" className="flex items-center h-[16px] shrink-0 mr-[2px] pl-px border border-[#d5d5d5]">
      <Glyph name="filter" size="size-[11px]" />
    </button>
    <div className="flex items-center gap-[2px] h-[14px] shrink-0 pt-px border-b-2 border-[#e9a93a] whitespace-pre text-[#333]">
      <Glyph name="part" size="size-[10px]" />
      <span>{'Part5  (Default<<Default>_Dis'}</span>
    </div>
    <ul className="-mt-px border-b-3 border-[#4a86b8]">
      {TREE.map((item) => <TreeRow key={item.label} item={item} />)}
    </ul>
    <div className="flex items-center gap-[4px] h-[10px] mt-auto mb-[2px] px-[3px] bg-[#f0f0f0]">
      <svg viewBox="0 0 4 6" className="w-[4px] h-[6px]"><path d="M3.500.500L1 3l2.500 2.500" fill="none" stroke="#444" /></svg>
      <span className="w-[64px] h-full bg-[#cbcbcb]" />
      <svg viewBox="0 0 4 6" className="w-[4px] h-[6px] ml-auto"><path d="M.5.500L3 3 .5 5.500" fill="none" stroke="#444" /></svg>
    </div>
    <button aria-label="Collapse panel" className="absolute left-full top-[195px] flex items-center justify-center w-[7px] h-[25px] bg-white border border-l-0 border-[#c6c6c6]">
      <span className="size-[3px] rounded-full border border-[#bbb]" />
    </button>
  </section>
);

const OUTLINE =
  'M452 169L515.500 171.300L519 121L570 123L566 173L630 176L613 400L677 402A24.500 24.500 0 0 1 674 451L609.500 448L608 468.500L431 461.500L431.500 441.500L391 439.500L394 389L436 390.500Z';

const Part = () => (
  <svg viewBox="150 88 810 429" className="w-full h-full" role="img" aria-label="Flat pattern of the sheet metal part">
    <path d={OUTLINE} fill="#e1e1e1" stroke="#c4925f" strokeWidth="1.500" />
    {/* darker thickness edges on the lower and right sides */}
    <g fill="none" stroke="#7d5e46" strokeWidth=".8">
      <path d="M570.500 123L566.500 173M630.300 176.600L613.600 400M609 449L674 451.500A24.500 24.500 0 0 0 699 424M608.500 448L607.600 469L431 462M431 441.800L391 440" />
    </g>
    <path d="M436 388.500l9 .5v3l-9-.5zM431.500 440.500l9.500.5v3l-9.500-.5z" fill="#a98058" stroke="#7c5a3c" strokeWidth=".6" />
    <g fill="none" stroke="#999" strokeWidth=".9" strokeDasharray="8 2 2 2">
      <path d="M447 239.500L625 246.500M437.500 360.500L615 367.500M516 168L566 170M435.500 391L431.500 441M613 400L609.500 448" />
    </g>
    <circle cx="516" cy="367.700" r="27.600" fill="#fff" stroke="#c08a58" strokeWidth="1.500" />
    <path d="M489 371A27.600 27.600 0 0 1 530 343.500" fill="none" stroke="#5d4534" strokeWidth="1" />
    <circle cx="674.500" cy="426.500" r="10.800" fill="#fff" stroke="#b07c4e" strokeWidth="1.600" />
    <path d="M664 429A10.800 10.800 0 0 1 680 417" fill="none" stroke="#5d4534" strokeWidth="1" />
    <path d="M488.500 362.500L543.500 364.700" stroke="#999" strokeWidth=".9" strokeDasharray="8 2 2 2" />
    <path d="M513.500 367.500h5M516 365v5M672 426.500h5M674.500 424v5" stroke="#777" strokeWidth=".8" />
    <g fill="#7b6655">
      {[[452, 169], [515.5, 171.3], [519, 121], [570, 123], [566, 173], [630, 176], [447, 239.5], [625, 246.5], [437.5, 360.5], [615, 367.5], [613, 400], [677, 402], [394, 389], [391, 440], [609.5, 448]].map(([x, y]) => (
        <circle key={`${x}-${y}`} cx={x} cy={y} r="1" />
      ))}
    </g>

    {/* sketch origin */}
    <path d="M431.500 461V443M431 461.500H439" stroke="#5a3aa8" strokeWidth="1" />
    <path d="M431.500 441l-2 4h4zM440 461.500l-4-2v4zM429.500 459.500h3v3h-3z" fill="#3a2fd0" />

    {/* view triad */}
    <path d="M176 483V469" stroke="#1f6b2b" strokeWidth="2" />
    <path d="M176 464.500l-3 6h6z" fill="#1f5a28" />
    <path d="M176 484H189" stroke="#c22d28" strokeWidth="2" />
    <path d="M194 484l-6-3v6z" fill="#c22d28" />
    <circle cx="173" cy="481.500" r="2.800" fill="#16209a" />
    <path d="M173 481l4 4" stroke="#16209a" strokeWidth="1.500" />
    <text x="174" y="464" fontSize="7" fill="#5f8f68">Y</text>
    <text x="193" y="486.500" fontSize="7" fill="#d0605c">X</text>
    <text x="170" y="479" fontSize="5" fill="#4a52b8">Z</text>

    {/* pointer */}
    <path d="M471.500 282.500v9l2-1.800 1.500 3.300 1.300-.6-1.500-3.200h2.700z" fill="#fff" stroke="#444" strokeWidth=".8" />
    <path d="M478.500 290.500h6.500v6.500h-6.500z" fill="#4ba0cc" stroke="#24536d" strokeWidth=".9" />
  </svg>
);

const TaskPane = () => (
  <div className="absolute top-[14px] right-0 flex flex-col w-[15px] border border-r-0 border-[#b5b5b5]">
    {['home', 'library', 'folderOpen', 'palette', 'ballDark', 'list'].map((name, i) => (
      <button
        key={name}
        aria-label={name}
        className={clsx('flex items-center justify-center h-[15px]', i === 0 ? 'bg-white' : 'bg-[#d3d3d3] border-t border-[#b0b0b0]')}
      >
        <Glyph name={name} size="size-[11px]" />
      </button>
    ))}
  </div>
);

const StatusBar = () => (
  <footer className="flex items-center h-[10px] shrink-0 border-t border-[#b9b9b9] bg-[#f4f4f4] text-[#333] font-['Noto_Sans','Open_Sans',sans-serif] text-[7px] leading-[9px]">
    <span>SOLIDWORKS Premium 2021 SP1.0</span>
    <span className="ml-auto"><Glyph name="rebuild" size="size-[9px]" /></span>
    <div className="flex items-center w-[38px] ml-[39px]">
      <select aria-label="Unit system" className="appearance-none w-[34px] text-[7px] leading-[9px]">
        <option>MMGS</option>
      </select>
      <Caret />
    </div>
    <span className="ml-[12px]"><Glyph name="tag" size="size-[9px]" /></span>
  </footer>
);

const App = () => (
  <div className="flex h-screen overflow-hidden bg-white pb-[13px] font-['Roboto','Open_Sans',sans-serif]">
    {/* sliver of the desktop left of the window */}
    <div className="flex flex-col w-[3px] shrink-0">
      <div className="h-[13px] bg-[#e6e6e6]" />
      <div className="h-[67px] bg-[#2c2f33]" />
      <div className="h-[116px] bg-[#15537c]" />
      <div className="h-[104px] bg-[#26262a]" />
      <div className="h-[64px] bg-[#d0702c]" />
      <div className="h-[33px] bg-[#2f2b2c]" />
      <div className="flex-1 bg-black" />
    </div>
    <div className="flex flex-col flex-1 min-w-0 pt-[13px]">
      <TitleBar />
      <Ribbon />
      <TabRow />
      <div className="flex flex-1 min-h-0">
        <SideBar />
        <FeatureManager />
        <main className="relative flex-1 min-w-0">
          <Part />
          <TaskPane />
        </main>
      </div>
      <StatusBar />
    </div>
  </div>
);

export default App;
